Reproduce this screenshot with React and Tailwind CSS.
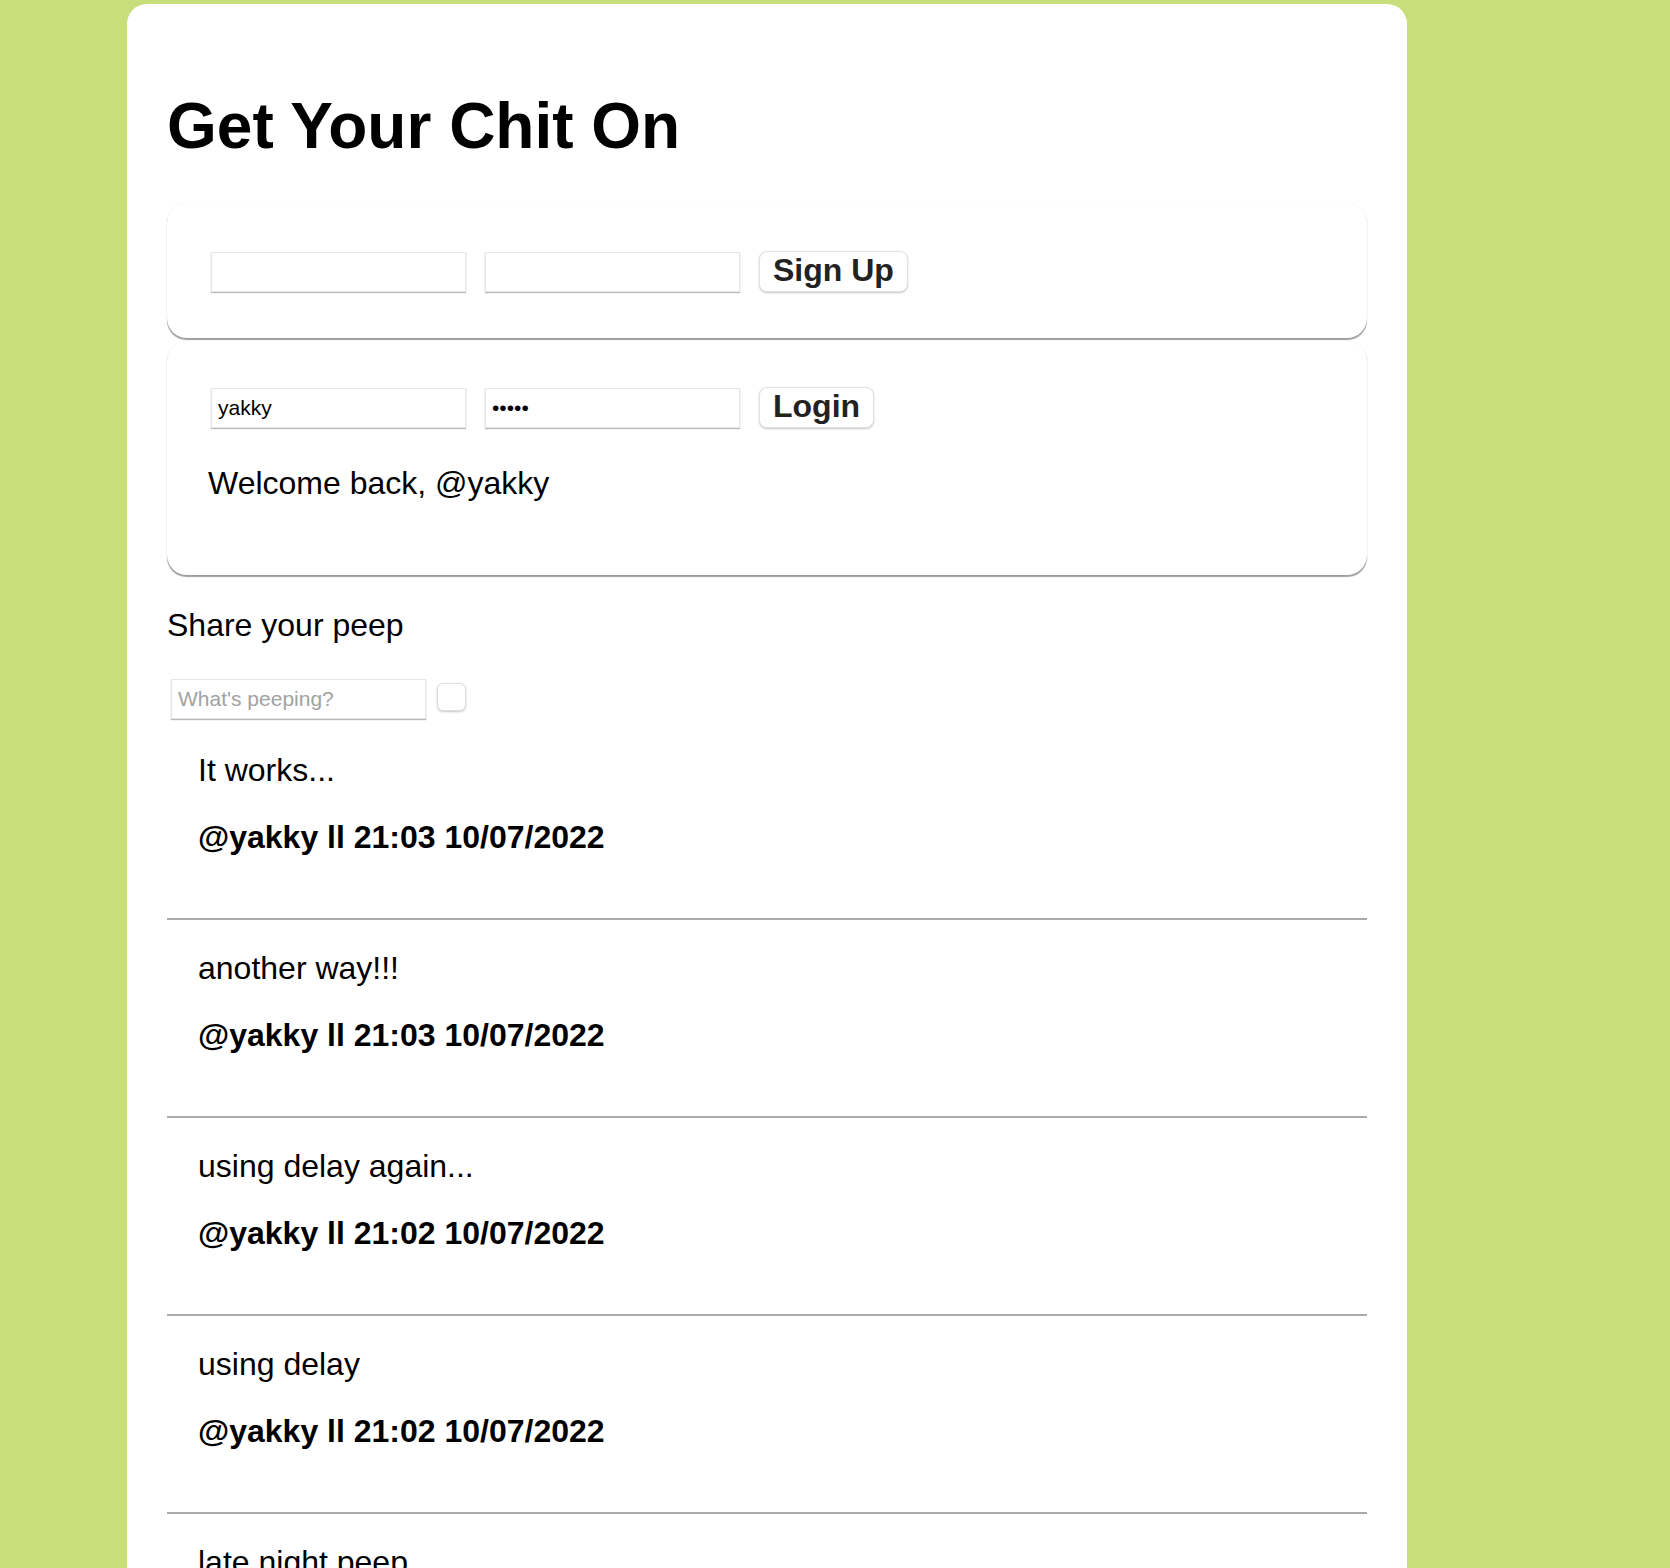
import { useState } from 'react';

const peeps = [
  { id: 1, text: 'It works...', user: 'yakky', time: '21:03 10/07/2022' },
  { id: 2, text: 'another way!!!', user: 'yakky', time: '21:03 10/07/2022' },
  { id: 3, text: 'using delay again...', user: 'yakky', time: '21:02 10/07/2022' },
  { id: 4, text: 'using delay', user: 'yakky', time: '21:02 10/07/2022' },
  { id: 5, text: 'late night peep', user: 'yakky', time: '23:41 09/07/2022' },
  { id: 6, text: 'first peep!', user: 'yakky', time: '19:12 09/07/2022' },
];

const inputClass =
  'h-[40px] w-[255px] border border-[#e6e6e6] bg-white px-[6px] text-[21px] text-black shadow-[0_1px_1px_rgba(0,0,0,0.28)] outline-none';

const buttonClass =
  'h-[41px] rounded-[8px] border border-[#e2e2e2] bg-white px-[13px] pb-[3px] text-[32px] font-bold leading-none text-[#222] shadow-[0_1px_2px_rgba(0,0,0,0.22)]';

function Panel({ children, className = '' }) {
  return (
    <section
      className={`rounded-[20px] bg-white pl-[44px] shadow-[0_2px_1px_-0.5px_rgba(0,0,0,0.38),0_0_1px_rgba(0,0,0,0.1)] ${className}`}
    >
      {children}
    </section>
  );
}

function Peep({ peep }) {
  return (
    <article className="border-b-2 border-[#ababab] pl-[31px] pt-[30px] pb-[62px]">
      <p className="text-[32px] leading-[37px]">{peep.text}</p>
      <p className="mt-[30px] text-[32px] font-bold leading-[37px]">
        @{peep.user} ll {peep.time}
      </p>
    </article>
  );
}

export default function App() {
  const [username, setUsername] = useState('yakky');
  const [password, setPassword] = useState('12345');
  const [draft, setDraft] = useState('');

  return (
    <div className="min-h-screen bg-[#c8de7a] pt-[4px] font-['Liberation_Sans',Arial,sans-serif] text-black">
      <main className="ml-[127px] w-[1280px] rounded-t-[20px] bg-white px-[40px] pt-[86px] pb-[80px]">
        <h1 className="text-[64px] font-bold leading-[72px]">Get Your Chit On</h1>

        <Panel className="mt-[41px] pt-[48px] pb-[46px]">
          <div className="flex items-center gap-[19px]">
            <input className={inputClass} />
            <input type="password" className={inputClass} />
            <button type="button" className={buttonClass}>
              Sign Up
            </button>
          </div>
        </Panel>

        <Panel className="mt-[3px] pt-[46px] pb-[73px]">
          <div className="flex items-center gap-[19px]">
            <input className={inputClass} value={username} onChange={(e) => setUsername(e.target.value)} />
            <input
              type="password"
              className={inputClass}
              value={password}
              onChange={(e) => setPassword(e.target.value)}
            />
            <button type="button" className={buttonClass}>
              Login
            </button>
          </div>
          <p className="mt-[37px] -ml-[3px] text-[32px] leading-[37px]">Welcome back, @yakky</p>
        </Panel>

        <h2 className="mt-[32px] text-[32px] leading-[37px]">Share your peep</h2>

        <div className="mt-[35px] flex items-start gap-[11px] pl-[4px]">
          <input
            className={`${inputClass} h-[39px] text-[21.5px] placeholder:text-[#a2a2a2]`}
            placeholder="What's peeping?"
            value={draft}
            onChange={(e) => setDraft(e.target.value)}
          />
          <button
            type="button"
            aria-label="Peep"
            className="mt-[4px] h-[28px] w-[29px] rounded-[6px] border border-[#dedede] bg-white shadow-[0_1px_2px_rgba(0,0,0,0.22)]"
          />
        </div>

        <div className="mt-[3px]">
          {peeps.map((peep) => (
            <Peep key={peep.id} peep={peep} />
          ))}
        </div>
      </main>
    </div>
  );
}
